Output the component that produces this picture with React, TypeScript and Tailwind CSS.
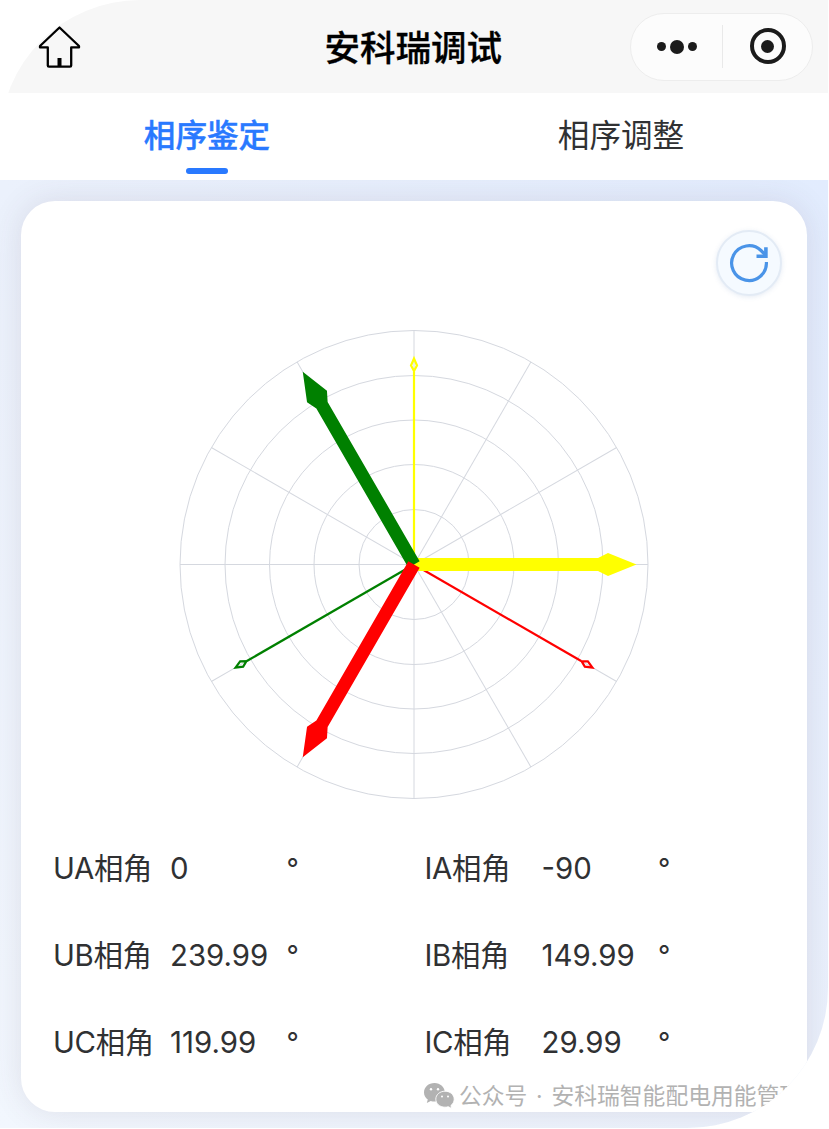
const CX = 414;
const CY = 564.5;

const rings = [55, 100, 144.5, 189, 234];
const spokes = [0, 30, 60, 90, 120, 150];

const voltages = [
  { color: "#ffff00", angle: 0 },
  { color: "#008000", angle: -120 },
  { color: "#ff0000", angle: 120 },
];

const currents = [
  { color: "#ffff00", angle: -90 },
  { color: "#ff0000", angle: 30 },
  { color: "#008000", angle: 150 },
];

const rows = [
  [
    { label: "UA相角", value: "0" },
    { label: "IA相角", value: "-90" },
  ],
  [
    { label: "UB相角", value: "239.99" },
    { label: "IB相角", value: "149.99" },
  ],
  [
    { label: "UC相角", value: "119.99" },
    { label: "IC相角", value: "29.99" },
  ],
];

function HomeIcon() {
  return (
    <svg width="44" height="44" viewBox="0 0 44 44" fill="none" stroke="#000" strokeWidth="2.3" strokeLinejoin="round">
      <path d="M22.5 2.5 3 21v1.4h7.8v18q0 1.2 1.2 1.2h21q1.2 0 1.2-1.2v-18H42V21Z" />
      <path d="M22.500 33v8" strokeWidth="4" />
    </svg>
  );
}

function Header() {
  return (
    <header className="flex h-[93px] shrink-0 items-center bg-[#f7f7f7] pr-[15px] pl-[37px]">
      <HomeIcon />
      <h1 className="ml-[243.5px] pt-[5px] text-[35.5px] leading-none font-medium text-black [-webkit-text-stroke:0.3px_#000]">
        安科瑞调试
      </h1>
      <div className="ml-auto flex h-[68px] w-[183px] items-center rounded-full border border-[#ededed] bg-[#fcfcfc]">
        <div className="flex h-full w-[91px] items-center justify-center gap-1">
          <span className="size-[9px] rounded-full bg-[#1b1b1b]" />
          <span className="size-[14px] rounded-full bg-[#1b1b1b]" />
          <span className="size-[9px] rounded-full bg-[#1b1b1b]" />
        </div>
        <div className="h-[43px] w-px bg-[#e9e9e9]" />
        <div className="flex flex-1 items-center justify-center pb-px">
          <div className="flex size-9 items-center justify-center rounded-full border-[4px] border-[#1b1b1b]">
            <span className="size-[13px] rounded-full bg-[#1b1b1b]" />
          </div>
        </div>
      </div>
    </header>
  );
}

function Tabs() {
  return (
    <nav className="grid h-[87px] shrink-0 grid-cols-2 bg-white text-[31.6px] leading-none">
      <div className="flex flex-col items-center pt-[27px] font-medium text-[#2979ff] [-webkit-text-stroke:0.4px_#2979ff]">
        相序鉴定
        <span className="mt-[16px] h-[6px] w-[42px] rounded-full bg-[#2979ff]" />
      </div>
      <div className="flex flex-col items-center pt-[27px] text-[#303133]">相序调整</div>
    </nav>
  );
}

function PhasorChart() {
  return (
    <svg className="mt-[27px] ml-[151px]" width="484" height="484" viewBox="172 323 484 484">
      <g fill="none" stroke="#d5d8df" strokeWidth="1">
        {rings.map((r) => (
          <circle key={r} cx={CX} cy={CY} r={r} />
        ))}
        {spokes.map((a) => (
          <line key={a} x1={CX - 234} y1={CY} x2={CX + 234} y2={CY} transform={`rotate(${a} ${CX} ${CY})`} />
        ))}
      </g>
      {/* Currents: thin arrows with a hollow head */}
      {currents.map((p) => (
        <g key={p.color} transform={`translate(${CX} ${CY}) rotate(${p.angle})`} stroke={p.color} fill="none" strokeWidth="2.2">
          <path d="M0 0H193" />
          <path d="M193.5 0 199 -3 206 0 199 3Z" strokeWidth="2.2" />
        </g>
      ))}
      {/* Voltages: solid arrows */}
      {voltages.map((p) => (
        <path
          key={p.color}
          transform={`translate(${CX} ${CY}) rotate(${p.angle})`}
          fill={p.color}
          d="M0 -6.5H184L194 -11.5 222.5 0 194 11.5 184 6.5H0Z"
        />
      ))}
    </svg>
  );
}

function RefreshButton() {
  return (
    <button className="mt-[29px] mr-[25px] flex size-[66px] items-center justify-center self-end rounded-full border-2 border-[#e3ebf5] bg-[#f5faff] shadow-[0_1px_5px_rgba(80,120,180,0.15)]">
      <svg width="44" height="44" viewBox="0 0 44 44" fill="none" stroke="#4a94e8" strokeWidth="3.2">
        <path d="M39.4 21A17.4 17.4 0 1 1 34 9.500L38 13.500" />
        <path d="M38.900 6.200V15.300H29.500" strokeWidth="3.6" />
      </svg>
    </button>
  );
}

function WechatIcon() {
  return (
    <svg width="32" height="28" viewBox="0 0 32 28" fill="#b2b2b2">
      <path d="M11.5 1C5.4 1 1 5.2 1 10.4c0 3 1.500 5.400 3.800 7.100l-1 3.500 3.900-2c1.200.4 2.500.6 3.800.6 5.900 0 10.300-4.200 10.300-9.200S17.400 1 11.500 1Z" />
      <path
        d="M22 9.200c-5.300 0-9.200 3.600-9.200 8s3.900 8 9.200 8c1.200 0 2.300-.2 3.300-.5l3.500 1.900-.9-3.100c2-1.400 3.300-3.800 3.300-6.300 0-4.400-4-8-9.200-8Z"
        stroke="#fff"
        strokeWidth="0.9"
      />
      <g fill="#fff">
        <circle cx="8" cy="7.3" r="1.2" />
        <circle cx="15" cy="7.3" r="1.2" />
        <circle cx="19" cy="14.6" r="1" />
        <circle cx="25" cy="14.6" r="1" />
      </g>
    </svg>
  );
}

export default function App() {
  return (
    <div className="h-[1129px] w-[829px] overflow-hidden bg-white font-['Inter','Noto_Sans_CJK_SC',sans-serif]">
      <div className="relative flex h-[1128px] w-[828px] flex-col overflow-hidden rounded-tl-[140px] rounded-br-[140px]">
        <Header />
        <Tabs />
        <main className="flex-1 overflow-hidden bg-linear-to-bl from-[#e2ecfe] via-[#ebf1fc] to-[#f2f7fe] px-[21px] pt-[21px]">
          <section className="flex h-[911px] w-[786px] flex-col rounded-[34px] bg-white shadow-[0_0_32px_rgba(80,55,75,0.12)]">
            <RefreshButton />
            <PhasorChart />
            <div className="mt-[18px] flex flex-col pl-8 text-[29.4px] text-[#303133]">
              {rows.map((row) => (
                <div key={row[0].label} className="flex h-[87px] items-center">
                  {row.map((item) => (
                    <div key={item.label} className="flex w-[371.5px] items-center whitespace-nowrap leading-none">
                      <span className="w-[117px] tracking-[-0.3px]">{item.label}</span>
                      <span className="w-[116.5px]">{item.value}</span>
                      <span className="pb-px text-[27px]">°</span>
                    </div>
                  ))}
                </div>
              ))}
            </div>
          </section>
        </main>
        {/* Account credit over the card's lower edge */}
        <div className="absolute top-[1081px] left-[423px] flex items-center whitespace-nowrap text-[22.8px] leading-[30px] text-[#b2b2b2]">
          <WechatIcon />
          <span className="ml-1">公众号</span>
          <span className="w-[24px] text-center">·</span>
          <span>安科瑞智能配电用能管理</span>
        </div>
      </div>
    </div>
  );
}
